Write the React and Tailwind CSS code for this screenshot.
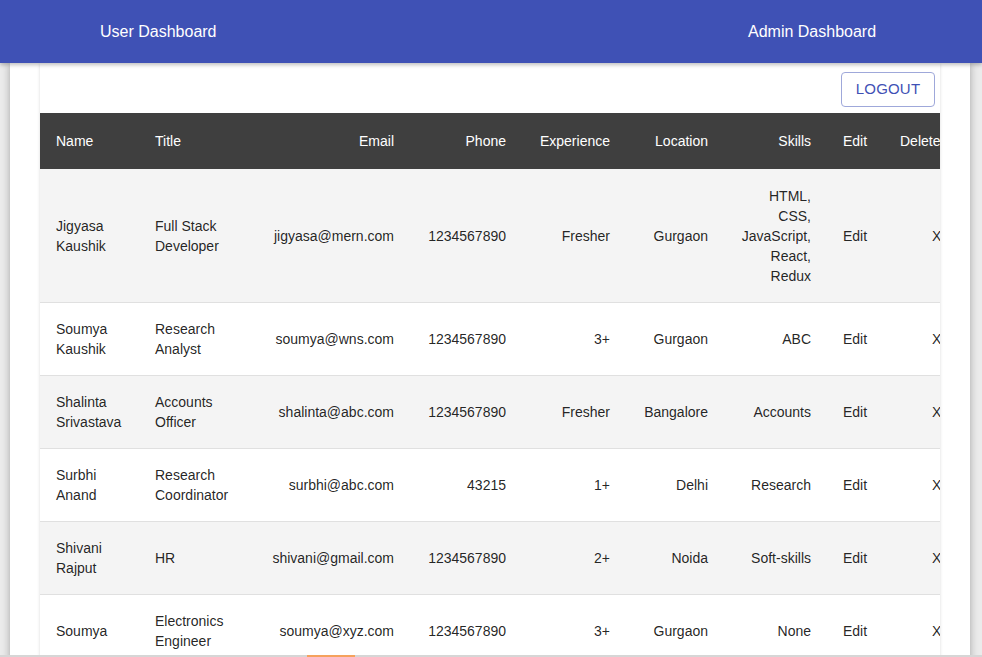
import React from "react";

const rows = [
  { name: "Jigyasa Kaushik", title: "Full Stack Developer", email: "jigyasa@mern.com", phone: "1234567890", exp: "Fresher", loc: "Gurgaon", skills: "HTML, CSS, JavaScript, React, Redux" },
  { name: "Soumya Kaushik", title: "Research Analyst", email: "soumya@wns.com", phone: "1234567890", exp: "3+", loc: "Gurgaon", skills: "ABC" },
  { name: "Shalinta Srivastava", title: "Accounts Officer", email: "shalinta@abc.com", phone: "1234567890", exp: "Fresher", loc: "Bangalore", skills: "Accounts" },
  { name: "Surbhi Anand", title: "Research Coordinator", email: "surbhi@abc.com", phone: "43215", exp: "1+", loc: "Delhi", skills: "Research" },
  { name: "Shivani Rajput", title: "HR", email: "shivani@gmail.com", phone: "1234567890", exp: "2+", loc: "Noida", skills: "Soft-skills" },
  { name: "Soumya", title: "Electronics Engineer", email: "soumya@xyz.com", phone: "1234567890", exp: "3+", loc: "Gurgaon", skills: "None" },
];

export default function App() {
  return (
    <div className="relative h-[657px] overflow-hidden bg-[#ebebeb] font-['Liberation_Sans',Arial,sans-serif]">
      <header className="relative z-10 flex h-[63px] items-center bg-[#3f51b5] text-base text-white shadow-[0_2px_4px_rgba(0,0,0,0.25)]">
        <div className="w-[748px] pl-[100px]">User Dashboard</div>
        <div>Admin Dashboard</div>
      </header>

      <div className="ml-[10px] h-full w-[960px] bg-white px-[30px] shadow-[0_0_8px_rgba(0,0,0,0.3)]">
        <div className="bg-white shadow-[0_1px_3px_rgba(0,0,0,0.15)]">
          <div className="flex justify-end pr-[5px] pt-[9px] pb-[6px]">
            <button className="h-[35px] w-[94px] rounded border border-[#9fa8da] text-[15px] tracking-[0.2px] text-[#3f51b5]">
              LOGOUT
            </button>
          </div>
          <div className="overflow-hidden">
            <table className="w-[922px] table-fixed border-collapse text-sm leading-5 text-[rgba(0,0,0,0.87)]">
              <colgroup>
                <col className="w-[99px]" />
                <col className="w-[115px]" />
                <col className="w-[156px]" />
                <col className="w-[112px]" />
                <col className="w-[104px]" />
                <col className="w-[98px]" />
                <col className="w-[103px]" />
                <col className="w-[57px]" />
                <col className="w-[78px]" />
              </colgroup>
              <thead>
                <tr className="h-[56px] border-b border-[#f4f4f4] bg-[#3f3f3f] text-white">
                  <th className="px-4 text-left font-normal">Name</th>
                  <th className="px-4 text-left font-normal">Title</th>
                  <th className="px-4 text-right font-normal">Email</th>
                  <th className="px-4 text-right font-normal">Phone</th>
                  <th className="px-4 text-right font-normal">Experience</th>
                  <th className="px-4 text-right font-normal">Location</th>
                  <th className="px-4 text-right font-normal">Skills</th>
                  <th className="px-4 text-left font-normal">Edit</th>
                  <th className="px-4 text-left font-normal whitespace-nowrap">Delete</th>
                </tr>
              </thead>
              <tbody>
                {rows.map((r, i) => (
                  <tr key={i} className={`border-b border-[#e0e0e0] ${i % 2 === 0 ? "bg-[#f4f4f4]" : "bg-white"}`}>
                    <td className="p-4 text-left">{r.name}</td>
                    <td className="p-4 text-left">{r.title}</td>
                    <td className="p-4 text-right">{r.email}</td>
                    <td className="p-4 text-right">{r.phone}</td>
                    <td className="p-4 text-right">{r.exp}</td>
                    <td className="p-4 text-right">{r.loc}</td>
                    <td className="py-4 pr-4 pl-3 text-right">{r.skills}</td>
                    <td className="p-4 text-left">Edit</td>
                    <td className="py-4 pl-[48px] text-left">X</td>
                  </tr>
                ))}
              </tbody>
            </table>
          </div>
        </div>
      </div>

      <div className="absolute left-0 right-0 top-[655px] h-[2px] bg-[#d6d6d6]">
        <div className="ml-[307px] h-[2px] w-[48px] bg-[#f5a25d]" />
      </div>
    </div>
  );
}
